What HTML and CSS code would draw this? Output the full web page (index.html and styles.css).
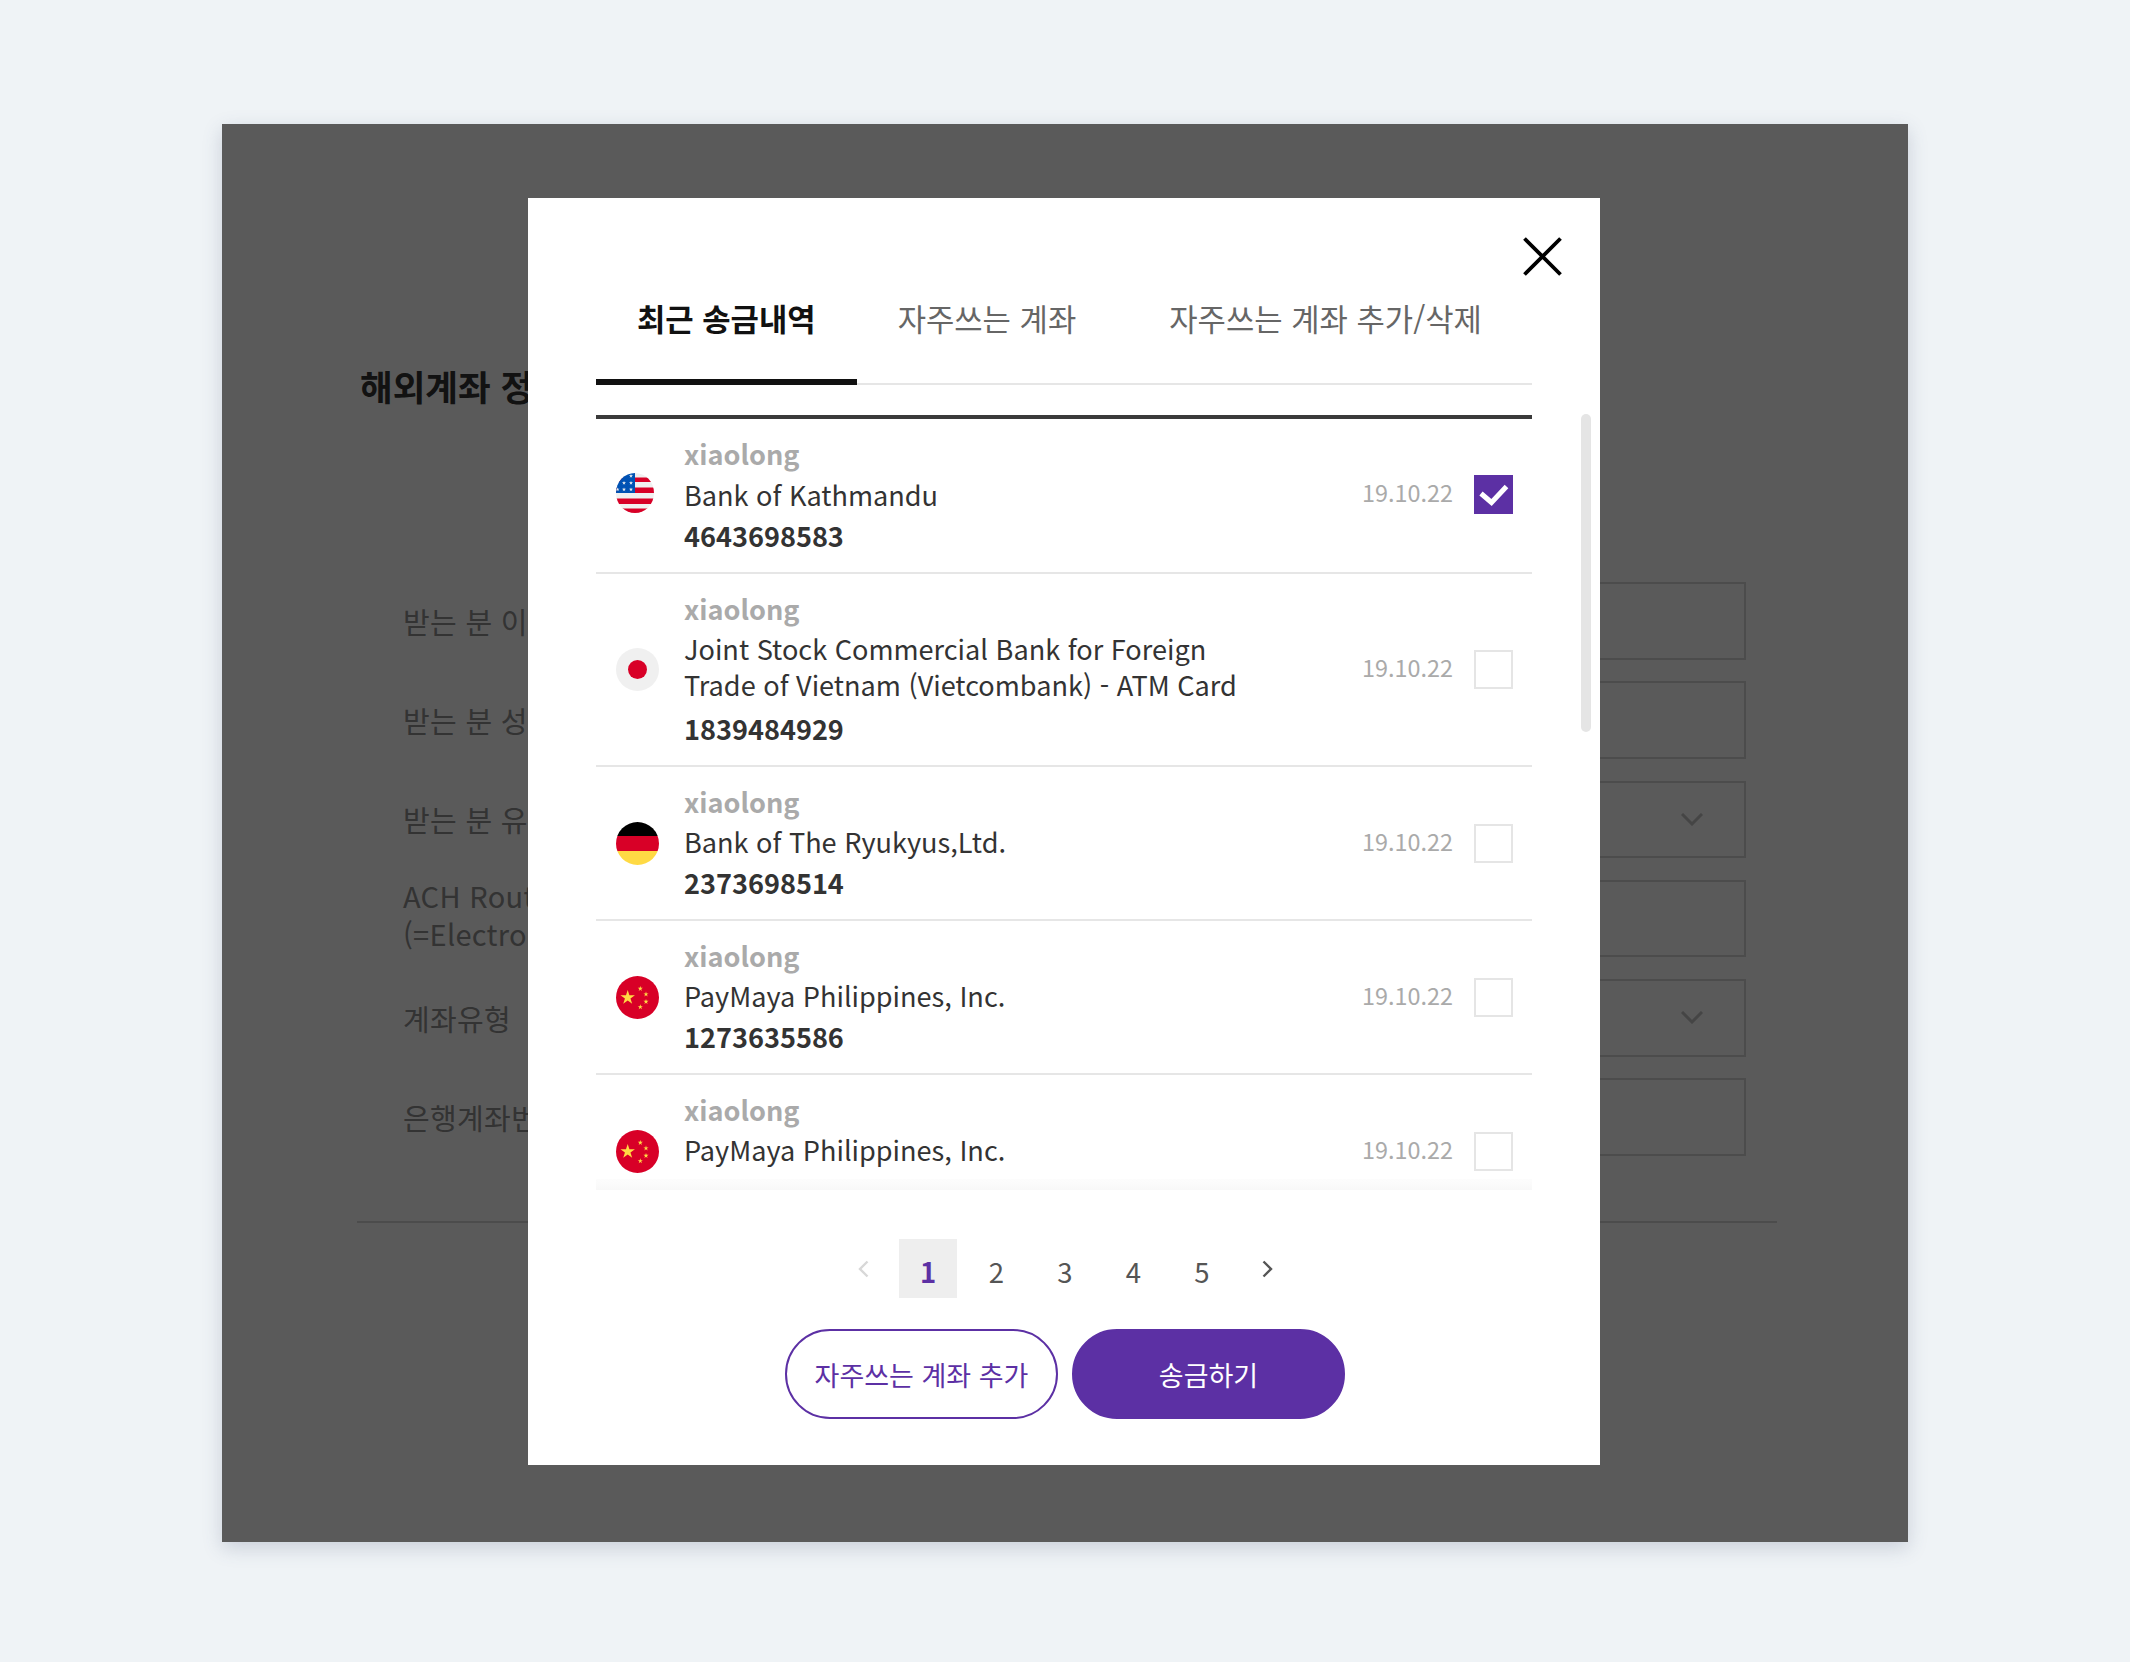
FILE: index.html
```html
<!DOCTYPE html>
<html lang="ko">
<head>
<meta charset="utf-8">
<title>해외계좌 정보</title>
<link rel="stylesheet" href="styles.css">
</head>
<body>
<svg class="defs" width="0" height="0" aria-hidden="true">
  <defs>
    <polygon id="star" points="0,-1 .225,-.309 .951,-.309 .363,.118 .588,.809 0,.382 -.588,.809 -.363,.118 -.951,-.309 -.225,-.309"/>
    <clipPath id="clip-us"><ellipse cx="19" cy="20" rx="19" ry="20"/></clipPath>
    <clipPath id="clip-round"><circle cx="21.5" cy="21.5" r="21.5"/></clipPath>
    <symbol id="flag-cn" viewBox="0 0 43 43">
      <circle cx="21.5" cy="21.5" r="21.5" fill="#d80027"/>
      <g fill="#ffda44">
        <use href="#star" transform="translate(11.7 21.7) scale(7.6)"/>
        <use href="#star" transform="translate(24.3 12.7) scale(2.7)"/>
        <use href="#star" transform="translate(30 18.3) scale(2.7)"/>
        <use href="#star" transform="translate(30 25.7) scale(2.7)"/>
        <use href="#star" transform="translate(24.3 31) scale(2.7)"/>
      </g>
    </symbol>
  </defs>
</svg>
<main class="page">
  <section class="panel">
    <h1 class="title">해외계좌 정보 입력</h1>
    <div class="form">
      <div class="field"><span class="label">받는 분 이름</span><span class="input"></span></div>
      <div class="field"><span class="label">받는 분 성</span><span class="input"></span></div>
      <div class="field"><span class="label">받는 분 유형</span><span class="input">
        <svg class="chev" viewBox="0 0 22 13"><path d="M1 1l10 10L21 1"/></svg></span></div>
      <div class="field"><span class="label label-two">ACH Routing Number<br>(=Electronic Routing)</span><span class="input"></span></div>
      <div class="field"><span class="label">계좌유형</span><span class="input">
        <svg class="chev" viewBox="0 0 22 13"><path d="M1 1l10 10L21 1"/></svg></span></div>
      <div class="field"><span class="label">은행계좌번호</span><span class="input"></span></div>
    </div>
    <hr class="rule">

    <div class="overlay"></div>
    <div class="modal">
      <button class="close" type="button" aria-label="닫기">
        <svg viewBox="0 0 39 39"><path d="M1.5 1.5l36 36M37.5 1.5l-36 36"/></svg>
      </button>
      <nav class="tabs">
        <a class="tab tab-active">최근 송금내역</a>
        <a class="tab">자주쓰는 계좌</a>
        <a class="tab tab-last">자주쓰는 계좌 추가/삭제</a>
      </nav>
      <div class="thumb"></div>
      <div class="list">
        <div class="row row-first">
          <svg class="flag flag-us" viewBox="0 0 38 40">
            <g clip-path="url(#clip-us)">
              <rect width="38" height="40" fill="#f0f0f0"/>
              <path fill="#d80027" d="M0 4.5h38V9H0zM0 14.5h38V20H0zM0 25.5h38V31H0zM0 35.5h38V40H0z"/>
              <rect width="19" height="20" fill="#0052b4"/>
              <g fill="#f0f0f0">
                <use href="#star" transform="translate(15 3) scale(2.1)"/>
                <use href="#star" transform="translate(8 10) scale(2.1)"/>
                <use href="#star" transform="translate(15 10) scale(2.1)"/>
                <use href="#star" transform="translate(1.5 16.5) scale(2.1)"/>
                <use href="#star" transform="translate(8 16.5) scale(2.1)"/>
                <use href="#star" transform="translate(15 16.5) scale(2.1)"/>
              </g>
            </g>
          </svg>
          <div class="info">
            <div class="name">xiaolong</div>
            <div class="bank">Bank of Kathmandu</div>
            <div class="acct">4643698583</div>
          </div>
          <span class="date">19.10.22</span>
          <span class="check check-on"><svg viewBox="0 0 39 39"><path d="M7 18.5l10.5 9 15-16"/></svg></span>
        </div>
        <div class="row">
          <svg class="flag" viewBox="0 0 43 43"><circle cx="21.5" cy="21.5" r="21.5" fill="#f0f0f0"/><circle cx="21.5" cy="21.5" r="9.5" fill="#d80027"/></svg>
          <div class="info">
            <div class="name">xiaolong</div>
            <div class="bank bank-two">Joint Stock Commercial Bank for Foreign Trade of Vietnam (Vietcombank) - ATM Card</div>
            <div class="acct">1839484929</div>
          </div>
          <span class="date">19.10.22</span>
          <span class="check"></span>
        </div>
        <div class="row">
          <svg class="flag" viewBox="0 0 43 43"><g clip-path="url(#clip-round)"><rect width="43" height="14" fill="#000"/><rect y="14" width="43" height="15" fill="#d80027"/><rect y="29" width="43" height="14" fill="#ffda44"/></g></svg>
          <div class="info">
            <div class="name">xiaolong</div>
            <div class="bank">Bank of The Ryukyus,Ltd.</div>
            <div class="acct">2373698514</div>
          </div>
          <span class="date">19.10.22</span>
          <span class="check"></span>
        </div>
        <div class="row">
          <svg class="flag"><use href="#flag-cn"/></svg>
          <div class="info">
            <div class="name">xiaolong</div>
            <div class="bank">PayMaya Philippines, Inc.</div>
            <div class="acct">1273635586</div>
          </div>
          <span class="date">19.10.22</span>
          <span class="check"></span>
        </div>
        <div class="row">
          <svg class="flag"><use href="#flag-cn"/></svg>
          <div class="info">
            <div class="name">xiaolong</div>
            <div class="bank">PayMaya Philippines, Inc.</div>
            <div class="acct acct-hidden">1273635586</div>
          </div>
          <span class="date">19.10.22</span>
          <span class="check"></span>
        </div>
      </div>
      <div class="pager">
        <span class="arrow arrow-off"><svg viewBox="0 0 11 18"><path d="M9.5 1.5L2 9l7.5 7.5"/></svg></span>
        <span class="num num-on">1</span>
        <span class="num">2</span>
        <span class="num">3</span>
        <span class="num">4</span>
        <span class="num">5</span>
        <span class="arrow"><svg viewBox="0 0 11 18"><path d="M1.5 1.5L9 9l-7.5 7.5"/></svg></span>
      </div>
      <div class="actions">
        <button class="btn btn-line" type="button">자주쓰는 계좌 추가</button>
        <button class="btn btn-fill" type="button">송금하기</button>
      </div>
    </div>
  </section>
</main>
</body>
</html>
```

FILE: styles.css
```css
* { box-sizing: border-box; }
html, body { margin: 0; padding: 0; }
body {
  background: #eff3f6;
  font-family: "Noto Sans CJK KR", "Noto Sans", sans-serif;
  color: #333;
}
.defs { position: absolute; }

.page { padding: 124px 222px 120px; height: 1662px; }

.panel {
  position: relative;
  height: 1418px;
  background: #fff;
  padding: 240px 131px 0 135px;
  box-shadow: 0 6px 18px rgba(70, 80, 120, .22);
  overflow: hidden;
}

.title {
  margin: 0 0 0 3px;
  position: absolute;
  top: 237px;
  font-size: 35.5px;
  line-height: 50px;
  font-weight: 700;
  color: #333;
}

.form {
  display: flex;
  flex-direction: column;
  gap: 21.8px;
  margin-top: 218px;
  padding: 0 31px 0 46px;
}
.field { display: flex; align-items: center; height: 77.5px; }
.label { width: 361px; font-size: 29px; line-height: 40px; color: #909090; letter-spacing: .3px; }
.label-two { white-space: nowrap; line-height: 38px; margin-top: -10px; }
.input {
  flex: 1;
  height: 100%;
  border: 2px solid #d6d6d6;
  display: flex;
  align-items: center;
  justify-content: flex-end;
  padding-right: 41px;
}
.chev { width: 22px; height: 13px; fill: none; stroke: #c4c4c4; stroke-width: 3; }
.rule { border: 0; height: 2px; background: #d6d6d6; margin: 65px 0 0; width: 1420px; }

.overlay { position: absolute; inset: 0; background: rgba(0, 0, 0, .647); }

.modal {
  position: absolute;
  left: 306px;
  top: 74px;
  width: 1072px;
  background: #fff;
  padding: 102px 68px 46px;
}
.close {
  position: absolute;
  left: 995px;
  top: 39px;
  width: 39px;
  height: 39px;
  padding: 0;
  border: 0;
  background: none;
}
.close svg { display: block; width: 39px; height: 39px; fill: none; stroke: #000; stroke-width: 3.8; }

.tabs { display: flex; border-bottom: 2px solid #e6e6e6; height: 85px; }
.tab {
  padding: 0 41px;
  height: 85px;
  font-size: 30.8px;
  line-height: 36px;
  color: #666;
  white-space: nowrap;
}
.tab-active { font-weight: 700; color: #111; border-bottom: 6px solid #111; }
.tab-last { margin-left: 11px; padding-right: 0; }

.thumb {
  position: absolute;
  left: 1053px;
  top: 216px;
  width: 10px;
  height: 318px;
  border-radius: 5px;
  background: #e5e5e5;
}

.list {
  position: relative;
  margin-top: 30px;
  height: 775px;
  overflow: hidden;
}
.list::after {
  content: "";
  position: absolute;
  left: 0;
  right: 0;
  bottom: 0;
  height: 11px;
  background: linear-gradient(to bottom, rgba(247, 247, 247, .3), #f8f8f8);
}
.row {
  display: flex;
  align-items: center;
  padding: 16px 19px 16px 20px;
  border-bottom: 2px solid #e6e6e6;
}
.row-first { border-top: 4px solid #3a3a3a; padding: 17px 19px 16px 20px; }
.flag { flex: none; width: 43px; height: 43px; margin-right: 25px; }
.flag-us { width: 38px; height: 40px; margin-right: 30px; margin-top: -7px; }
.info { flex: 1; min-width: 0; margin: -1px 0 1px; }
.name { font-size: 27.1px; line-height: 40px; font-weight: 700; color: #aaa; }
.row-first .name { margin: -1px 0 1px; }
.bank { font-size: 27.1px; line-height: 40px; color: #333; max-width: 570px; }
.bank-two { line-height: 36px; padding: 2px 0 5px; }
.acct { font-size: 27.1px; line-height: 41px; margin-bottom: -1px; font-weight: 700; color: #333; }
.acct-hidden { visibility: hidden; }
.date { font-size: 23.4px; line-height: 30px; color: #aaa; margin-right: 21px; margin-top: -5px; }
.row-first .date { margin-top: -9px; }
.check {
  flex: none;
  width: 39px;
  height: 39px;
  border: 2px solid #e5e5e5;
  background: #fff;
}
.check-on { border: 0; background: #5c30a4; margin-top: -4px; }
.check svg { display: block; width: 39px; height: 39px; fill: none; stroke: #fff; stroke-width: 5; }

.pager {
  display: flex;
  justify-content: center;
  align-items: center;
  gap: 10.5px;
  margin: 49px 0 0 2px;
  height: 59px;
}
.num {
  width: 58px;
  height: 59px;
  font-size: 27.5px;
  line-height: 59px;
  padding-top: 3px;
  text-align: center;
  color: #555;
}
.num-on { background: #eee; color: #5c30a4; font-weight: 700; }
.arrow { width: 51px; display: flex; justify-content: center; }
.arrow svg { width: 11px; height: 18px; fill: none; stroke: #555; stroke-width: 2.4; }
.arrow-off svg { stroke: #d8d8d8; }

.actions { display: flex; justify-content: center; gap: 14px; margin: 31px 0 0 2px; }
.btn {
  width: 273px;
  height: 90px;
  border-radius: 45px;
  font-family: inherit;
  font-size: 27px;
  color: #5c30a4;
  border: 2px solid #5c30a4;
  background: #fff;
  padding: 0;
}
.btn-fill { background: #5c30a4; color: #fff; }
```
